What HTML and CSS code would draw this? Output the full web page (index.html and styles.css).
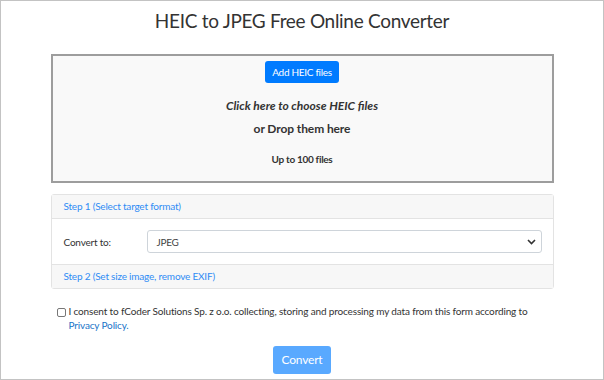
FILE: index.html
```html
<!DOCTYPE HTML>
<html>

<head>
  <meta charset="utf-8">
  <link rel="stylesheet" href="styles.css">
</head>

<body>
  <div class="frame">
    <h1 class="title">HEIC to JPEG Free Online Converter</h1>

    <div class="container">
      <div class="dropzone">
        <button class="btn-add">Add HEIC files</button>
        <p class="drop-choose">Click here to choose HEIC files</p>
        <p class="drop-or">or Drop them here</p>
        <p class="drop-limit">Up to 100 files</p>
      </div>

      <div class="steps">
        <div class="step-head">Step 1 (Select target format)</div>
        <div class="step-body">
          <label class="step-label">Convert to:</label>
          <div class="select">
            <span>JPEG</span>
            <svg width="9" height="6" viewBox="0 0 9 6">
              <path d="M1 1 L4.5 4.5 L8 1" fill="none" stroke="#333" stroke-width="1.6"/>
            </svg>
          </div>
        </div>
        <div class="step-head step-last">Step 2 (Set size image, remove EXIF)</div>
      </div>

      <div class="consent">
        <span class="check"></span>
        <p>I consent to fCoder Solutions Sp. z o.o. collecting, storing and processing my data from this form according to
          <a href="#">Privacy Policy.</a></p>
      </div>

      <div class="actions">
        <button class="btn-convert">Convert</button>
      </div>
    </div>
  </div>
</body>

</html>
```

FILE: styles.css
```css
html,
body {
  margin: 0;
  background: #fff;
}

body {
  font-family: Lato, "Open Sans", sans-serif;
  color: #333;
}

.frame {
  box-sizing: border-box;
  width: 604px;
  height: 380px;
  border: 1px solid #c3c3c3;
  overflow: hidden;
}

.title {
  margin: 6px 0 0;
  font-size: 19px;
  font-weight: 400;
  letter-spacing: -0.3px;
  line-height: 28px;
  text-align: center;
  color: #333;
}

.container {
  width: 503px;
  margin: 19px auto 0;
}

.dropzone {
  box-sizing: border-box;
  height: 129px;
  border: 2px solid #9d9d9d;
  background: #f9f9f9;
  text-align: center;
  padding-top: 4px;
}

.btn-add {
  height: 22px;
  padding: 0 7px;
  border: none;
  border-radius: 3px;
  background: #007bff;
  color: #fff;
  font: 400 10px/22px Lato, sans-serif;
  letter-spacing: -0.3px;
}

.drop-choose {
  margin: 11px 0 0;
  font-size: 12px;
  font-weight: 700;
  font-style: italic;
  line-height: 24px;
}

.drop-or {
  margin: 0;
  font-size: 12px;
  font-weight: 700;
  letter-spacing: -0.1px;
  line-height: 22px;
}

.drop-limit {
  margin: 12px 0 0;
  font-size: 10px;
  font-weight: 700;
  letter-spacing: -0.3px;
  line-height: 14px;
}

.steps {
  margin-top: 11px;
  border: 1px solid #e3e3e3;
  border-radius: 3px;
}

.step-head {
  height: 23px;
  padding-left: 12px;
  background: #f7f7f7;
  border-bottom: 1px solid #e3e3e3;
  color: #2f8cf5;
  font-size: 10px;
  letter-spacing: -0.2px;
  line-height: 23px;
}

.step-last {
  border-bottom: none;
}

.step-body {
  display: flex;
  align-items: center;
  height: 45px;
  padding: 0 11px 0 12px;
  border-bottom: 1px solid #e3e3e3;
}

.step-label {
  width: 83px;
  font-size: 10px;
  letter-spacing: -0.2px;
}

.select {
  flex: 1;
  display: flex;
  justify-content: space-between;
  align-items: center;
  box-sizing: border-box;
  height: 23px;
  padding: 0 5px 0 9px;
  border: 1px solid #ced4da;
  border-radius: 3px;
  font-size: 10px;
  letter-spacing: -0.3px;
  color: #444;
}

.consent {
  display: flex;
  align-items: flex-start;
  margin-top: 15px;
  padding-left: 6px;
}

.check {
  flex: none;
  width: 7px;
  height: 7px;
  margin-top: 4px;
  margin-right: 3px;
  border: 1px solid #777;
  border-radius: 2px;
}

.consent p {
  margin: 0;
  font-size: 10px;
  letter-spacing: -0.15px;
  line-height: 14px;
}

.consent a {
  color: #1a73c8;
  text-decoration: none;
}

.actions {
  margin-top: 14px;
  text-align: center;
}

.btn-convert {
  height: 28px;
  padding: 0 9px;
  border: none;
  border-radius: 3px;
  background: #59a9ff;
  color: #fff;
  font: 400 12px/28px Lato, sans-serif;
  letter-spacing: -0.2px;
}
```
